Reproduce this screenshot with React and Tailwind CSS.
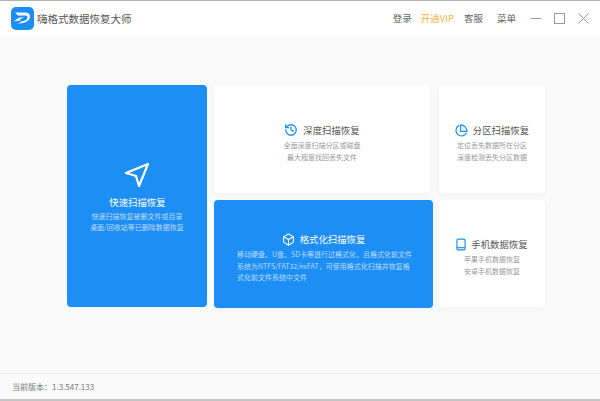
import { History, Box } from "lucide-react";

const font = { fontFamily: '"Noto Sans CJK SC", "Noto Sans", sans-serif' };

const Logo = () => (
  <svg width="23" height="23" viewBox="0 0 23 23">
    <rect width="23" height="23" rx="5" fill="#1c8ef4" />
    <path d="M4 5.500h9.500c4 0 6 2 5.500 4.500-.7 3.500-4.500 6-9 6.300l-3 .7c1.500-1 2.500-1.500 3.500-2.800 3.500-.2 5.800-1.500 6-3.800.1-1.400-1-2-3-2H7z" fill="#fff" />
    <path d="M3 14.500c2-2.500 5.500-4.500 10-4.300l-4.500 2.300 1 1.500c-2.500-.3-4.500-.2-6.500.5z" fill="#fff" />
  </svg>
);

const Send = () => (
  <svg width="26" height="26" viewBox="0 0 26 26" fill="none" stroke="#fff" strokeWidth="2.200" strokeLinejoin="round">
    <path d="M24 2 2 11l10 3 3 10z" />
  </svg>
);

const Pie = () => (
  <svg width="13" height="13" viewBox="0 0 14 14" fill="none" stroke="#1c8ef4" strokeWidth="1.300">
    <path d="M4.500 1.500a6 6 0 1 0 8 8" />
    <path d="M6 1a7 7 0 0 1 7 7H6z" />
  </svg>
);

const Phone = () => (
  <svg width="10" height="13" viewBox="0 0 11 14" fill="none" stroke="#1c8ef4" strokeWidth="1.300">
    <rect x="1" y="1" width="9" height="12" rx="1.500" />
    <path d="M1 10.500h9" />
  </svg>
);

const Card = ({ icon, title, lines, blue, left, className }) => (
  <div
    className={`flex flex-col rounded-sm ${blue ? "bg-[#1c8ef4] text-white" : "bg-white text-[#555555]"} shadow-[0_2px_6px_rgba(0,0,0,0.04)] ${className}`}
  >
    <div className="flex items-center justify-center gap-[5px] text-[9.400px] leading-[16px]">
      {icon}
      <span>{title}</span>
    </div>
    <div
      className={`text-[7px] leading-[11.500px] ${left ? "mt-[2px] pl-[23px] text-left" : "mt-[2px] text-center"} ${blue ? "text-[#bcdcfb]" : "text-[#999999]"}`}
    >
      {lines.map((l) => (
        <div key={l}>{l}</div>
      ))}
    </div>
  </div>
);

export default function App() {
  return (
    <div className="flex h-[401px] w-[600px] flex-col overflow-hidden bg-[#fafafa]" style={font}>
      {/* title bar */}
      <div className="flex h-[36px] shrink-0 items-center border-t border-[#b5b5b5] bg-white pl-[11px] pr-[11px]">
        <Logo />
        <span className="ml-[3px] text-[10.500px] text-[#555555]">嗨格式数据恢复大师</span>
        <div className="ml-auto flex items-center text-[9.500px] text-[#666666]">
          <span>登录</span>
          <span className="ml-[9px] text-[#f8b44a]">开通VIP</span>
          <span className="ml-[10px]">客服</span>
          <span className="ml-[14px]">菜单</span>
          <span className="ml-[15px] h-px w-[10px] bg-[#999999]" />
          <span className="ml-[13px] h-[11px] w-[11px] border border-[#999999]" />
          <svg className="ml-[13px]" width="11" height="11" viewBox="0 0 11 11" stroke="#999999">
            <path d="M.5.500l10 10M10.500.500l-10 10" />
          </svg>
        </div>
      </div>

      {/* cards */}
      <div className="flex flex-1 items-start pl-[67px] pt-[49px]">
        <div className="flex h-[222px] w-[140px] flex-col items-center rounded-sm bg-[#1c8ef4] pt-[77px] text-white">
          <Send />
          <div className="mt-[6px] pl-[1px] text-[9.400px] leading-[16px]">快速扫描恢复</div>
          <div className="mt-[1px] text-center text-[7px] leading-[11px] text-[#bcdcfb]">
            <div>快速扫描恢复被删文件或目录</div>
            <div>桌面/回收站等已删除数据恢复</div>
          </div>
        </div>
        <div className="ml-[7px] flex w-[216px] flex-col gap-[7px]">
          <Card
            className="h-[108px] pt-[37px]"
            icon={<History size={14} color="#1c8ef4" strokeWidth={2.200} />}
            title="深度扫描恢复"
            lines={["全面深度扫描分区或磁盘", "最大程度找回丢失文件"]}
          />
          <Card
            blue
            left
            className="h-[108px] w-[219px] pt-[31px]"
            icon={<Box size={13} color="#fff" />}
            title="格式化扫描恢复"
            lines={[
              "移动硬盘、U盘、SD卡等进行过格式化，且格式化前文件",
              "系统为NTFS/FAT32/exFAT，可使用格式化扫描并恢复格",
              "式化前文件系统中文件",
            ]}
          />
        </div>
        <div className="ml-[9px] flex w-[106px] flex-col gap-[7px]">
          <Card
            className="h-[108px] pt-[37px]"
            icon={<Pie />}
            title="分区扫描恢复"
            lines={["定位丢失数据所在分区", "深度检测丢失分区数据"]}
          />
          <Card
            className="h-[107px] pt-[36px]"
            icon={<Phone />}
            title="手机数据恢复"
            lines={["苹果手机数据恢复", "安卓手机数据恢复"]}
          />
        </div>
      </div>

      {/* footer */}
      <div className="flex h-[28px] shrink-0 items-center border-t border-[#efefef] border-b-[2px] border-b-[#c4c4c4] pl-[12px] text-[8px] text-[#777777]">
        当前版本：1.3.547.133
      </div>
    </div>
  );
}
